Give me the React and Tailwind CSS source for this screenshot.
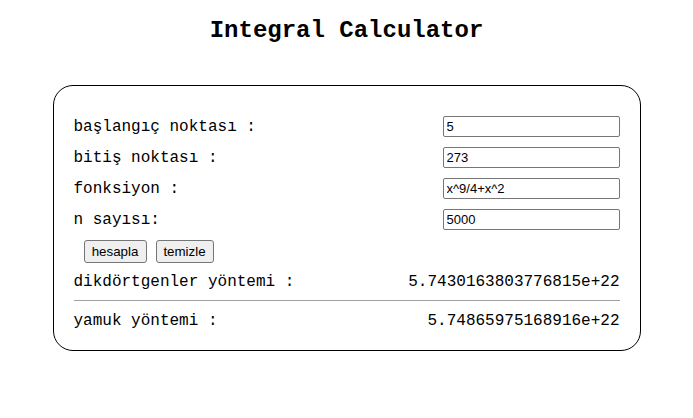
import React, { useState } from 'react';

const mono = { fontFamily: '"Liberation Mono", "Courier New", monospace' };

const Row = ({ label, value, onChange }) => (
  <div className="flex items-center justify-between h-[21px]">
    <label className="text-[16px] leading-[18px] text-black">{label}</label>
    <input
      value={value}
      onChange={(e) => onChange(e.target.value)}
      className="w-[177px] h-[21px] border border-[#767676] rounded-[2px] px-[3px] text-[13px] text-black outline-none font-['Liberation_Sans',Arial,sans-serif]"
    />
  </div>
);

const App = () => {
  const [a, setA] = useState('5');
  const [b, setB] = useState('273');
  const [f, setF] = useState('x^9/4+x^2');
  const [n, setN] = useState('5000');

  return (
    <div className="w-[693px] h-[418px] bg-white pt-[17px]" style={mono}>
      <h1 className="text-center text-[24px] leading-[28px] font-bold text-black">Integral Calculator</h1>

      <div className="w-[588px] mx-auto mt-[40px] border border-black rounded-[20px] pt-[30px] pb-[20px] pl-[20px] pr-[20px]">
        <div className="flex flex-col gap-[10px]">
          <Row label="başlangıç noktası :" value={a} onChange={setA} />
          <Row label="bitiş noktası :" value={b} onChange={setB} />
          <Row label="fonksiyon :" value={f} onChange={setF} />
          <Row label="n sayısı:" value={n} onChange={setN} />
        </div>

        <div className="flex gap-[9px] ml-[10px] mt-[10px] font-['Liberation_Sans',Arial,sans-serif] text-[13.33px]">
          <button className="w-[63px] h-[23px] bg-[#efefef] border border-[#767676] rounded-[3px] text-black">hesapla</button>
          <button className="w-[58px] h-[23px] bg-[#efefef] border border-[#767676] rounded-[3px] text-black" onClick={() => { setA(''); setB(''); setF(''); setN(''); }}>temizle</button>
        </div>

        <div className="flex justify-between mt-[10px] text-[16px] leading-[18px] text-black">
          <span>dikdörtgenler yöntemi :</span>
          <span>5.7430163803776815e+22</span>
        </div>
        <hr className="mt-[9px] mb-[11px] border-t border-[#a0a0a0]" />
        <div className="flex justify-between text-[16px] leading-[18px] text-black">
          <span>yamuk yöntemi :</span>
          <span>5.74865975168916e+22</span>
        </div>
      </div>
    </div>
  );
};

export default App;
